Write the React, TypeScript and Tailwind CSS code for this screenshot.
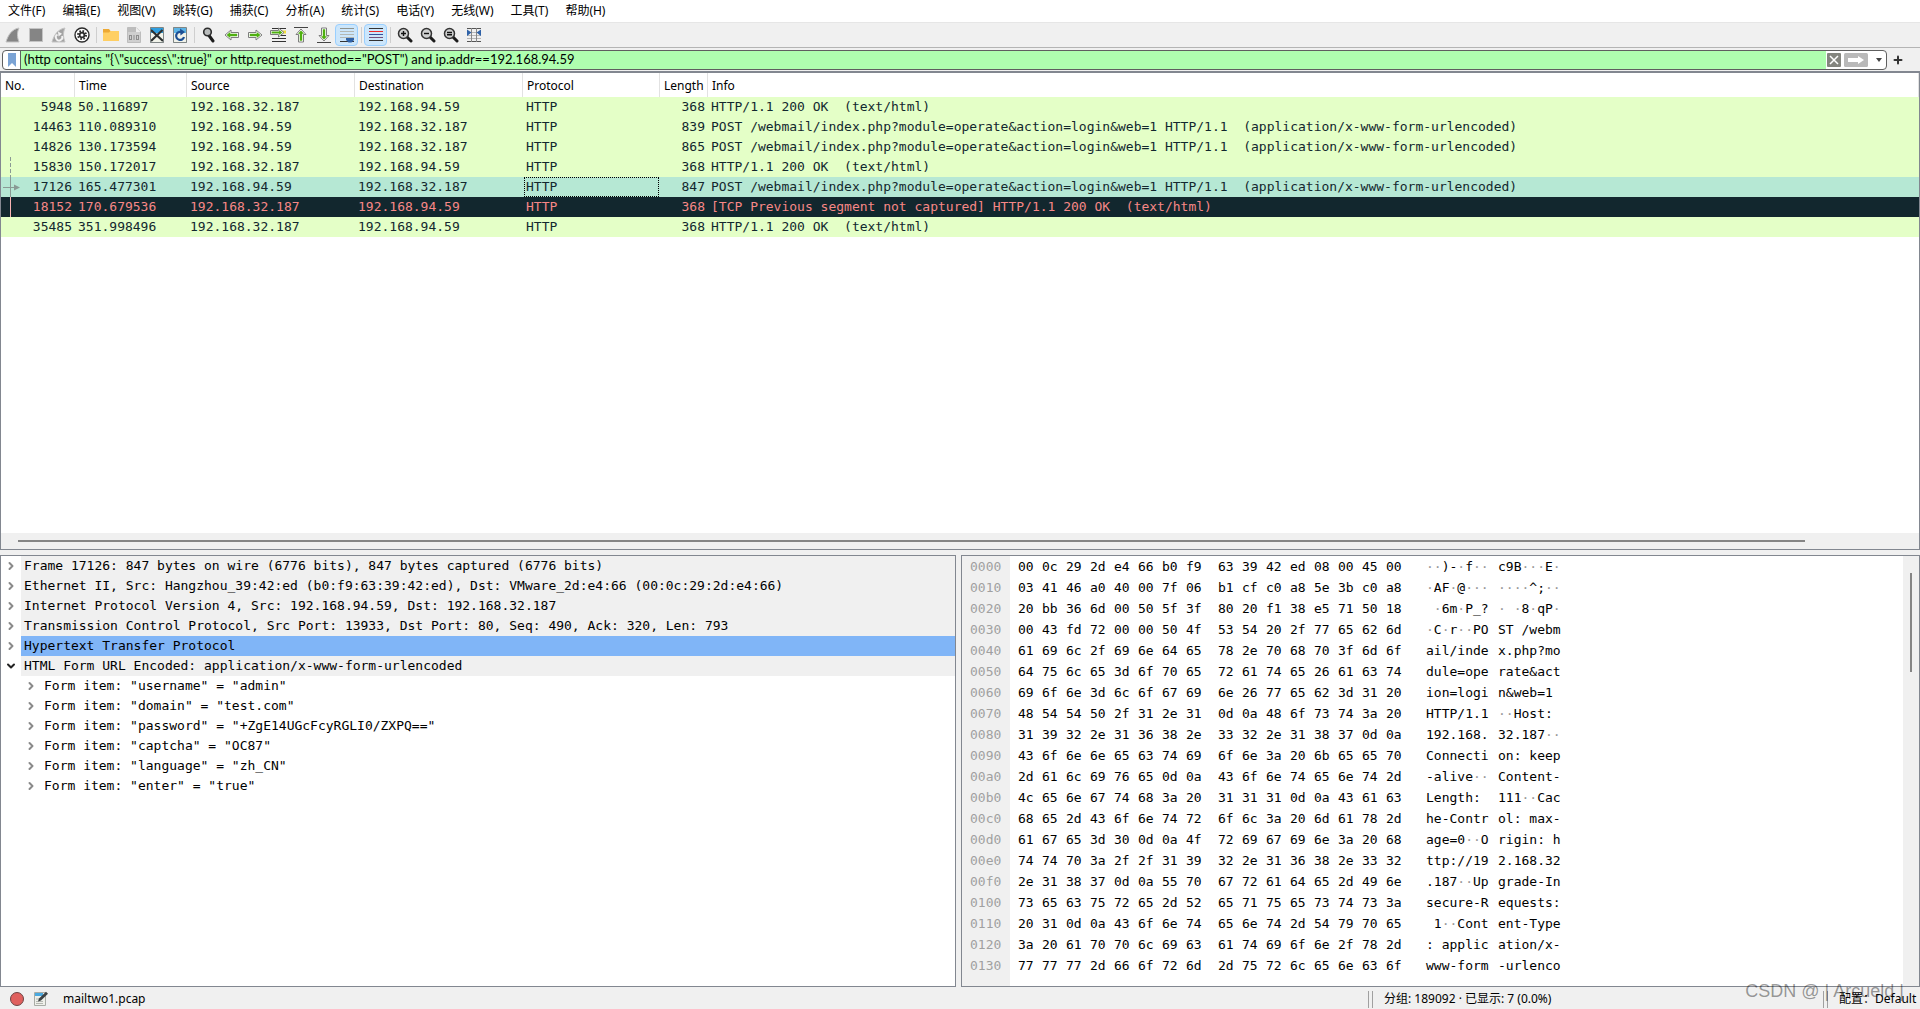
import * as React from 'react';
import { ChevronDown, ChevronRight, Plus } from 'lucide-react';

const menus = [
  '文件(F)', '编辑(E)', '视图(V)', '跳转(G)', '捕获(C)', '分析(A)',
  '统计(S)', '电话(Y)', '无线(W)', '工具(T)', '帮助(H)',
];

interface IPacket {
  no: string;
  time: string;
  src: string;
  dst: string;
  length: string;
  info: string;
  mark?: 'dashed' | 'arrow' | 'line';
}

const post = 'POST /webmail/index.php?module=operate&action=login&web=1 HTTP/1.1  (application/x-www-form-urlencoded)';
const ok = 'HTTP/1.1 200 OK  (text/html)';

const packets: IPacket[] = [
  { no: '5948', time: '50.116897', src: '192.168.32.187', dst: '192.168.94.59', length: '368', info: ok },
  { no: '14463', time: '110.089310', src: '192.168.94.59', dst: '192.168.32.187', length: '839', info: post },
  { no: '14826', time: '130.173594', src: '192.168.94.59', dst: '192.168.32.187', length: '865', info: post },
  { no: '15830', time: '150.172017', src: '192.168.32.187', dst: '192.168.94.59', length: '368', info: ok, mark: 'dashed' },
  { no: '17126', time: '165.477301', src: '192.168.94.59', dst: '192.168.32.187', length: '847', info: post, mark: 'arrow' },
  { no: '18152', time: '170.679536', src: '192.168.32.187', dst: '192.168.94.59', length: '368', info: '[TCP Previous segment not captured] ' + ok, mark: 'line' },
  { no: '35485', time: '351.998496', src: '192.168.32.187', dst: '192.168.94.59', length: '368', info: ok },
];

const layers = [
  'Frame 17126: 847 bytes on wire (6776 bits), 847 bytes captured (6776 bits)',
  'Ethernet II, Src: Hangzhou_39:42:ed (b0:f9:63:39:42:ed), Dst: VMware_2d:e4:66 (00:0c:29:2d:e4:66)',
  'Internet Protocol Version 4, Src: 192.168.94.59, Dst: 192.168.32.187',
  'Transmission Control Protocol, Src Port: 13933, Dst Port: 80, Seq: 490, Ack: 320, Len: 793',
  'Hypertext Transfer Protocol',
  'HTML Form URL Encoded: application/x-www-form-urlencoded',
];

const formItems = [
  'Form item: "username" = "admin"',
  'Form item: "domain" = "test.com"',
  'Form item: "password" = "+ZgE14UGcFcyRGLI0/ZXPQ=="',
  'Form item: "captcha" = "OC87"',
  'Form item: "language" = "zh_CN"',
  'Form item: "enter" = "true"',
];

const hexRows = [
  '00 0c 29 2d e4 66 b0 f9 63 39 42 ed 08 00 45 00',
  '03 41 46 a0 40 00 7f 06 b1 cf c0 a8 5e 3b c0 a8',
  '20 bb 36 6d 00 50 5f 3f 80 20 f1 38 e5 71 50 18',
  '00 43 fd 72 00 00 50 4f 53 54 20 2f 77 65 62 6d',
  '61 69 6c 2f 69 6e 64 65 78 2e 70 68 70 3f 6d 6f',
  '64 75 6c 65 3d 6f 70 65 72 61 74 65 26 61 63 74',
  '69 6f 6e 3d 6c 6f 67 69 6e 26 77 65 62 3d 31 20',
  '48 54 54 50 2f 31 2e 31 0d 0a 48 6f 73 74 3a 20',
  '31 39 32 2e 31 36 38 2e 33 32 2e 31 38 37 0d 0a',
  '43 6f 6e 6e 65 63 74 69 6f 6e 3a 20 6b 65 65 70',
  '2d 61 6c 69 76 65 0d 0a 43 6f 6e 74 65 6e 74 2d',
  '4c 65 6e 67 74 68 3a 20 31 31 31 0d 0a 43 61 63',
  '68 65 2d 43 6f 6e 74 72 6f 6c 3a 20 6d 61 78 2d',
  '61 67 65 3d 30 0d 0a 4f 72 69 67 69 6e 3a 20 68',
  '74 74 70 3a 2f 2f 31 39 32 2e 31 36 38 2e 33 32',
  '2e 31 38 37 0d 0a 55 70 67 72 61 64 65 2d 49 6e',
  '73 65 63 75 72 65 2d 52 65 71 75 65 73 74 73 3a',
  '20 31 0d 0a 43 6f 6e 74 65 6e 74 2d 54 79 70 65',
  '3a 20 61 70 70 6c 69 63 61 74 69 6f 6e 2f 78 2d',
  '77 77 77 2d 66 6f 72 6d 2d 75 72 6c 65 6e 63 6f',
];

// Toolbar drawings, all on a 16x16 grid
const Fin = () => (
  <svg viewBox="0 0 16 16" className="w-4 h-4">
    <path d="M1 15C3 8 7 2 14 1C12 5 12 10 14 15Z" fill="#858585" stroke="#c4c4c4" strokeWidth="1" />
  </svg>
);

const Stop = () => (
  <svg viewBox="0 0 16 16" className="w-4 h-4">
    <rect x="1.5" y="1.5" width="13" height="13" fill="#858585" stroke="#c4c4c4" />
  </svg>
);

const Restart = () => (
  <svg viewBox="0 0 16 16" className="w-4 h-4">
    <path d="M1 15C3 8 7 2 14 1C12 5 12 10 14 15Z" fill="#a3a3a3" stroke="#c4c4c4" />
    <path d="M6.5 7.5A3.2 3.2 0 1 0 11 9" fill="none" stroke="#f2f2f2" strokeWidth="1.8" />
    <path d="M7 4.5L11 6.8L7.5 9.5Z" fill="#f2f2f2" />
  </svg>
);

const Gear = () => (
  <svg viewBox="0 0 16 16" className="w-4 h-4">
    <circle cx="8" cy="8" r="7" fill="#fff" stroke="#2b2b2b" strokeWidth="1.4" />
    <circle cx="8" cy="8" r="4" fill="none" stroke="#2b2b2b" strokeWidth="2" strokeDasharray="1.6 1.54" />
    <circle cx="8" cy="8" r="3.2" fill="#2b2b2b" />
    <circle cx="8" cy="8" r="1.5" fill="#fff" />
  </svg>
);

const Folder = () => (
  <svg viewBox="0 0 16 16" className="w-4 h-4">
    <path d="M0 2H6L7.5 4H16V14H0Z" fill="#eda934" />
    <path d="M0 5.5H6L7.5 4H16V14H0Z" fill="#ffcf63" />
  </svg>
);

const FileShape = ({ muted = false }: { muted?: boolean }) => (
  <>
    <path d="M1.5 .5H10L14.5 5V15.5H1.5Z" fill={muted ? '#cfcfcf' : '#f1f3ea'} stroke={muted ? '#bdbdbd' : '#9ba3a3'} />
    <path d="M2 1H10V5H2Z" fill={muted ? '#bdbdbd' : '#2f9fe0'} />
    <path d="M10 .5V5H14.5Z" fill={muted ? '#eee' : '#d6e6ee'} />
  </>
);

const SaveFile = () => (
  <svg viewBox="0 0 16 16" className="w-4 h-4">
    <FileShape muted />
    <g fill="none" stroke="#8d8d8d">
      <rect x="3.5" y="8.5" width="2" height="4" />
      <path d="M8 8V13" />
      <rect x="10.5" y="8.5" width="2" height="4" />
    </g>
  </svg>
);

const CloseFile = () => (
  <svg viewBox="0 0 16 16" className="w-4 h-4">
    <FileShape />
    <path d="M2 1H14V6H2Z" fill="#2f9fe0" />
    <path d="M2 3L14 14M13.5 3L2 14" stroke="#2b2f30" strokeWidth="2.2" />
    <path d="M1.5 .5H14.5V15.5H1.5Z" fill="none" stroke="#7f8686" />
  </svg>
);

const ReloadFile = () => (
  <svg viewBox="0 0 16 16" className="w-4 h-4">
    <FileShape />
    <path d="M2 1H14V6H2Z" fill="#5cb4e6" />
    <path d="M9.5 5.2A4 4 0 1 0 12 10" fill="none" stroke="#1d4f94" strokeWidth="2.2" />
    <path d="M8 1.5L13 5L8.5 8.5Z" fill="#1d4f94" />
    <path d="M1.5 .5H14.5V15.5H1.5Z" fill="none" stroke="#7f8686" />
  </svg>
);

const Lens = ({ sign }: { sign: string }) => (
  <svg viewBox="0 0 16 16" className="w-4 h-4">
    <path d="M9.5 9.5L14 14" stroke="#1c1c1c" strokeWidth="3" strokeLinecap="round" />
    <circle cx="6.5" cy="6.5" r="5" fill="#cfd0d0" stroke="#333" strokeWidth="1.5" />
    <path d={sign} stroke="#111" strokeWidth="1.4" />
  </svg>
);

const Find = () => (
  <svg viewBox="0 0 16 16" className="w-4 h-4">
    <path d="M8 8.5L12 14" stroke="#1c1c1c" strokeWidth="3" strokeLinecap="round" />
    <circle cx="6.5" cy="5" r="3.8" fill="#b9bcbc" stroke="#2d2d2d" strokeWidth="1.6" />
  </svg>
);

const Back = () => (
  <svg viewBox="0 0 16 16" className="w-4 h-4">
    <path d="M1 8L7 3V5.5H14.5V10.5H7V13Z" fill="#fff" stroke="#7d7d7d" />
    <path d="M2.6 8L6.2 5V6.8H13.2V9.2H6.2V11Z" fill="#4fb010" />
  </svg>
);

const Forward = () => (
  <svg viewBox="0 0 16 16" className="w-4 h-4">
    <path d="M15 8L9 3V5.5H1.5V10.5H9V13Z" fill="#fff" stroke="#7d7d7d" />
    <path d="M13.4 8L9.8 5V6.8H2.8V9.2H9.8V11Z" fill="#4fb010" />
  </svg>
);

const GoTo = () => (
  <svg viewBox="0 0 16 16" className="w-4 h-4">
    <path d="M2 1.5H16M2 11.5H16M2 14.5H16M11 8.5H16" stroke="#333" strokeWidth="1.2" />
    <path d="M12 5H16" stroke="#f2dd3c" strokeWidth="3" />
    <path d="M14 5.5L8.5 1V3.5H.5V7.5H8.5V10Z" fill="#fff" stroke="#7d7d7d" />
    <path d="M12.4 5.5L9.2 3V4.6H1.6V6.4H9.2V8Z" fill="#4fb010" />
  </svg>
);

const First = () => (
  <svg viewBox="0 0 16 16" className="w-4 h-4">
    <path d="M1 .5H15" stroke="#444" />
    <path d="M8 2L13 7.5H10.5V15H5.5V7.5H3Z" fill="#fff" stroke="#7d7d7d" />
    <path d="M8 3.4L11 6.7H9.2V13.8H6.8V6.7H5Z" fill="#4fb010" />
  </svg>
);

const Last = () => (
  <svg viewBox="0 0 16 16" className="w-4 h-4">
    <path d="M1 15.5H15" stroke="#444" />
    <path d="M8 14L13 8.5H10.5V1H5.5V8.5H3Z" fill="#fff" stroke="#7d7d7d" />
    <path d="M8 12.6L11 9.3H9.2V2.2H6.8V9.3H5Z" fill="#4fb010" />
  </svg>
);

const AutoScroll = () => (
  <svg viewBox="0 0 16 16" className="w-4 h-4">
    <path d="M1 1.5H15" stroke="#8f938d" />
    <path d="M1 4.5H15M1 7.5H15M1 10.5H15" stroke="#b4b7b2" />
    <path d="M1 14.5H15" stroke="#333" />
    <path d="M7 11H15V13L12.5 15.5H9.5L7 13Z" fill="#2f62a8" />
  </svg>
);

const Colorize = () => (
  <svg viewBox="0 0 16 16" className="w-4 h-4">
    <path d="M1 1.5H15" stroke="#333" />
    <path d="M1 4.5H15" stroke="#ef2929" />
    <path d="M1 7.5H15" stroke="#34519c" />
    <path d="M1 10.5H15" stroke="#75507b" />
    <path d="M1 13.5H15" stroke="#333" />
  </svg>
);

const ResizeColumns = () => (
  <svg viewBox="0 0 16 16" className="w-4 h-4">
    <path d="M1 1.5H15M1 14.5H15" stroke="#555" />
    <path d="M1 5.5H15M1 8.5H15M1 11.5H15" stroke="#b5b5b5" />
    <path d="M5.5 1V15M10.5 1V15" stroke="#888" />
    <path d="M1 2.5L5.5 5.5L1 9ZM15 2.5L10.5 5.5L15 9Z" fill="#2f62a8" />
  </svg>
);

interface ITool {
  label: string;
  icon: React.ReactNode;
  active?: boolean;
}

const toolGroups: ITool[][] = [
  [
    { label: 'Start capture', icon: <Fin /> },
    { label: 'Stop capture', icon: <Stop /> },
    { label: 'Restart capture', icon: <Restart /> },
    { label: 'Capture options', icon: <Gear /> },
  ],
  [
    { label: 'Open', icon: <Folder /> },
    { label: 'Save', icon: <SaveFile /> },
    { label: 'Close file', icon: <CloseFile /> },
    { label: 'Reload file', icon: <ReloadFile /> },
  ],
  [
    { label: 'Find packet', icon: <Find /> },
    { label: 'Previous packet', icon: <Back /> },
    { label: 'Next packet', icon: <Forward /> },
    { label: 'Go to packet', icon: <GoTo /> },
    { label: 'First packet', icon: <First /> },
    { label: 'Last packet', icon: <Last /> },
    { label: 'Auto scroll', icon: <AutoScroll />, active: true },
  ],
  [{ label: 'Colorize', icon: <Colorize />, active: true }],
  [
    { label: 'Zoom in', icon: <Lens sign="M4 6.5H9M6.5 4V9" /> },
    { label: 'Zoom out', icon: <Lens sign="M4 6.5H9" /> },
    { label: 'Normal size', icon: <Lens sign="M4 5.5H9M4 7.8H9" /> },
    { label: 'Resize columns', icon: <ResizeColumns /> },
  ],
];

const Toolbar = () => (
  <div className="flex items-center h-[25px] pl-px bg-[#f0f0f0] border-t border-[#e6e6e6]">
    {toolGroups.map((group, i) => (
      <React.Fragment key={i}>
        {i > 0 && (
          <span className="flex justify-center w-1.5">
            <span className="w-px h-4 bg-[#cfcfcf]" />
          </span>
        )}
        {group.map((tool) => (
          <button
            key={tool.label}
            aria-label={tool.label}
            className={
              tool.active
                ? 'flex items-center justify-center w-[23px] h-[22px] rounded-sm border border-[#99cfff] bg-[#cce6fb]'
                : 'flex items-center justify-center w-[23px] h-[22px]'
            }
          >
            {tool.icon}
          </button>
        ))}
      </React.Fragment>
    ))}
  </div>
);

const FilterBar = () => {
  const [filter, setFilter] = React.useState(
    '(http contains "{\\"success\\":true}" or http.request.method=="POST") and ip.addr==192.168.94.59'
  );
  return (
    <div className="flex items-center h-6 pl-0.5 bg-[#f0f0f0] border-t border-[#b4b4b4]">
      <div className="flex flex-1 items-stretch h-5 overflow-hidden rounded-sm border border-[#5f5f5f] bg-white">
        <button aria-label="Bookmark" className="flex items-center justify-center w-[18px] border-r border-[#5f5f5f]">
          <svg viewBox="0 0 10 14" className="w-2.5 h-3.5">
            <path d="M1 0H9V14L5 10L1 14Z" fill="#7ba3d4" />
          </svg>
        </button>
        <input
          aria-label="Display filter"
          value={filter}
          onChange={(e) => setFilter(e.target.value)}
          className="flex-1 min-w-0 pl-[3px] bg-[#afffaf] font-['Lato',sans-serif] text-[13px] text-black outline-none"
        />
        <div className="flex items-center gap-[3px] pl-px">
          <button aria-label="Clear filter">
            <svg viewBox="0 0 14 14" className="w-3.5 h-3.5">
              <rect width="14" height="14" rx="1" fill="#84857f" />
              <path d="M3 3L11 11M11 3L3 11" stroke="#fff" strokeWidth="1.5" />
            </svg>
          </button>
          <button aria-label="Apply filter">
            <svg viewBox="0 0 24 14" className="w-6 h-3.5">
              <rect width="24" height="14" rx="1.5" fill="#b9b9b9" />
              <path d="M4 5H14V3L20 7L14 11V9H4Z" fill="#fff" />
            </svg>
          </button>
          <button aria-label="Recent filters" className="flex items-center justify-center w-[15px]">
            <svg viewBox="0 0 6 4" className="w-1.5 h-1">
              <path d="M0 0H6L3 4Z" fill="#444" />
            </svg>
          </button>
        </div>
      </div>
      <button aria-label="Add filter button" className="flex items-center justify-center w-[33px] pr-3">
        <Plus className="w-3 h-3 text-[#333]" strokeWidth={4} />
      </button>
    </div>
  );
};

// Conversation line drawn to the left of the packet number
const RelatedMark = ({ mark }: { mark?: IPacket['mark'] }) => (
  <svg viewBox="0 0 20 20" className="w-5 h-5">
    {mark === 'dashed' && <path d="M9.5 0V20" stroke="#8a9a94" strokeDasharray="4 2" />}
    {mark === 'arrow' && (
      <>
        <path d="M9.5 0V20M2 10.5H14" stroke="#8a9a94" />
        <path d="M13 7.5L19 10.5L13 13.5Z" fill="#8a9a94" />
      </>
    )}
    {mark === 'line' && <path d="M9.5 0V20" stroke="#f9b4b4" />}
  </svg>
);

const rowColor = (p: IPacket) => {
  if (p.mark === 'arrow') return 'h-5 bg-[#b6e8d4] text-[#12272e]';
  if (p.mark === 'line') return 'h-5 bg-[#12272e] text-[#f78787]';
  return 'h-5 bg-[#e4ffc7] text-[#12272e]';
};

const PacketList = () => (
  <section className="flex flex-col flex-[476] min-h-0 border border-t-2 border-[#828790] bg-white">
    <div className="flex-1 min-h-0 overflow-hidden">
      <table className="w-full table-fixed border-collapse">
        <colgroup>
          <col className="w-[74px]" />
          <col className="w-[112px]" />
          <col className="w-[168px]" />
          <col className="w-[168px]" />
          <col className="w-[137px]" />
          <col className="w-[48px]" />
          <col />
        </colgroup>
        <thead>
          <tr className="h-6 text-left text-[12px]">
            {['No.', 'Time', 'Source', 'Destination', 'Protocol', 'Length', 'Info'].map((h) => (
              <th key={h} className="p-0 pt-0.5 pl-1 font-normal shadow-[inset_-1px_0_0_#e2e2e2]">{h}</th>
            ))}
          </tr>
        </thead>
        <tbody className="font-['DejaVu_Sans_Mono',monospace] text-[13px] leading-5 whitespace-pre">
          {packets.map((p) => (
            <tr key={p.no} className={rowColor(p)}>
              <td className="p-0 pr-[3px]">
                <div className="flex justify-between">
                  <RelatedMark mark={p.mark} />
                  {p.no}
                </div>
              </td>
              <td className="p-0 pl-[3px]">{p.time}</td>
              <td className="p-0 pl-[3px]">{p.src}</td>
              <td className="p-0 pl-[3px]">{p.dst}</td>
              <td className="p-0">
                <div className={p.mark === 'arrow' ? 'h-5 ml-px mr-px pl-0.5 outline-1 -outline-offset-1 outline-dotted outline-black' : 'h-5 pl-[3px]'}>HTTP</div>
              </td>
              <td className="p-0 pr-[3px] text-right">{p.length}</td>
              <td className="p-0 pl-[3px]">{p.info}</td>
            </tr>
          ))}
        </tbody>
      </table>
    </div>
    <div className="flex items-center h-4 pl-[17px] bg-[#f0f0f0]">
      <div className="w-[94%] h-0.5 bg-[#858585]" />
    </div>
  </section>
);

const PacketDetails = () => (
  <section className="flex-[954] min-w-0 overflow-hidden border border-[#828790] bg-white">
    <ul className="font-['DejaVu_Sans_Mono',monospace] text-[13px] leading-5 whitespace-pre text-black">
      {layers.map((text, i) => (
        <li key={text} className="flex h-5">
          <button aria-label="Toggle layer" className="flex items-center justify-center w-5 h-5">
            {i === 5 ? (
              <ChevronDown className="w-3 h-3 text-[#222]" strokeWidth={4} />
            ) : (
              <ChevronRight className="w-3 h-3 text-[#8a8a8a]" strokeWidth={4} />
            )}
          </button>
          <span className={i === 4 ? 'flex-1 pl-[3px] bg-[#80b5f7]' : 'flex-1 pl-[3px] bg-[#f0f0f0]'}>{text}</span>
        </li>
      ))}
      {formItems.map((text) => (
        <li key={text} className="flex h-5 pl-5">
          <button aria-label="Toggle item" className="flex items-center justify-center w-5 h-5">
            <ChevronRight className="w-3 h-3 text-[#8a8a8a]" strokeWidth={4} />
          </button>
          <span className="pl-[3px]">{text}</span>
        </li>
      ))}
    </ul>
  </section>
);

const Ascii = ({ bytes }: { bytes: string[] }) => (
  <span className="w-[72px]">
    {bytes.map((b, i) => {
      const code = parseInt(b, 16);
      return code < 0x20 || code > 0x7e ? (
        <span key={i} className="text-[#999]">·</span>
      ) : (
        <span key={i}>{String.fromCharCode(code)}</span>
      );
    })}
  </span>
);

const PacketBytes = () => (
  <section className="flex flex-[957] min-w-0 overflow-hidden border border-[#828790] bg-white font-['DejaVu_Sans_Mono',monospace] text-[13px] leading-[21px] whitespace-pre text-black">
    <div className="w-12 pl-2 bg-[#f0f0f0] text-[#a0a0a0]">
      {hexRows.map((_, i) => (
        <div key={i}>{(i * 16).toString(16).padStart(4, '0')}</div>
      ))}
    </div>
    <div className="flex-1 min-w-0 pl-2">
      {hexRows.map((row, i) => {
        const bytes = row.split(' ');
        return (
          <div key={i} className="flex">
            <div className="flex w-[200px]">
              {bytes.slice(0, 8).map((b, j) => <span key={j} className="w-6">{b}</span>)}
            </div>
            <div className="flex w-[208px]">
              {bytes.slice(8).map((b, j) => <span key={j} className="w-6">{b}</span>)}
            </div>
            <Ascii bytes={bytes.slice(0, 8)} />
            <Ascii bytes={bytes.slice(8)} />
          </div>
        );
      })}
    </div>
    <div className="flex justify-center w-4 pt-[17px] bg-[#f0f0f0]">
      <div className="w-0.5 h-[24%] bg-[#858585]" />
    </div>
  </section>
);

const Grip = () => <span className="w-[5px] h-[17px] border-x border-[#a0a0a0]" />;

const StatusBar = () => (
  <footer className="relative flex items-center h-[22px] pt-0.5 bg-[#f0f0f0] text-[12px] text-black">
    <div className="flex flex-1 items-center pl-[9px]">
      <button aria-label="Expert information">
        <svg viewBox="0 0 16 16" className="w-4 h-4">
          <circle cx="8" cy="8" r="6.5" fill="#e0605e" stroke="#6e4444" />
        </svg>
      </button>
      <button aria-label="Capture comment" className="ml-2">
        <svg viewBox="0 0 16 16" className="w-4 h-4">
          <path d="M1.5 1.5H12.5V14.5H1.5Z" fill="#eef0ea" stroke="#a9aca6" />
          <path d="M2 2H10V5H2Z" fill="#4aa9e0" />
          <path d="M3 8H7M3 10.5H10M3 12.5H10" stroke="#b5b8b2" />
          <path d="M5 10.5L6 7.5L13 .8L15 2.8L8 9.5Z" fill="#3c4144" />
        </svg>
      </button>
      <span className="ml-[14px]">mailtwo1.pcap</span>
    </div>
    <div className="flex items-center gap-[11px] w-[455px]">
      <Grip />
      <span>分组: 189092 · 已显示: 7 (0.0%)</span>
    </div>
    <div className="flex items-center gap-[11px] w-[97px] whitespace-nowrap">
      <Grip />
      <span>配置：Default</span>
    </div>
    <span className="absolute right-4 -top-2 font-['Liberation_Sans',sans-serif] text-[18px] leading-6 text-black/40 whitespace-nowrap">CSDN @ | Arcueld |</span>
  </footer>
);

export default function App() {
  return (
    <div className="flex flex-col h-screen overflow-hidden bg-[#f0f0f0] font-['Noto_Sans','Noto_Sans_CJK_SC',sans-serif]">
      <nav className="flex items-center gap-[17px] h-[22px] pl-2 bg-white text-[12px] text-black">
        {menus.map((m) => (
          <button key={m} className="whitespace-nowrap">{m}</button>
        ))}
      </nav>
      <Toolbar />
      <FilterBar />
      <main className="flex flex-col flex-1 gap-[5px] min-h-0">
        <PacketList />
        <div className="flex flex-[432] gap-[5px] min-h-0">
          <PacketDetails />
          <PacketBytes />
        </div>
      </main>
      <StatusBar />
    </div>
  );
}
